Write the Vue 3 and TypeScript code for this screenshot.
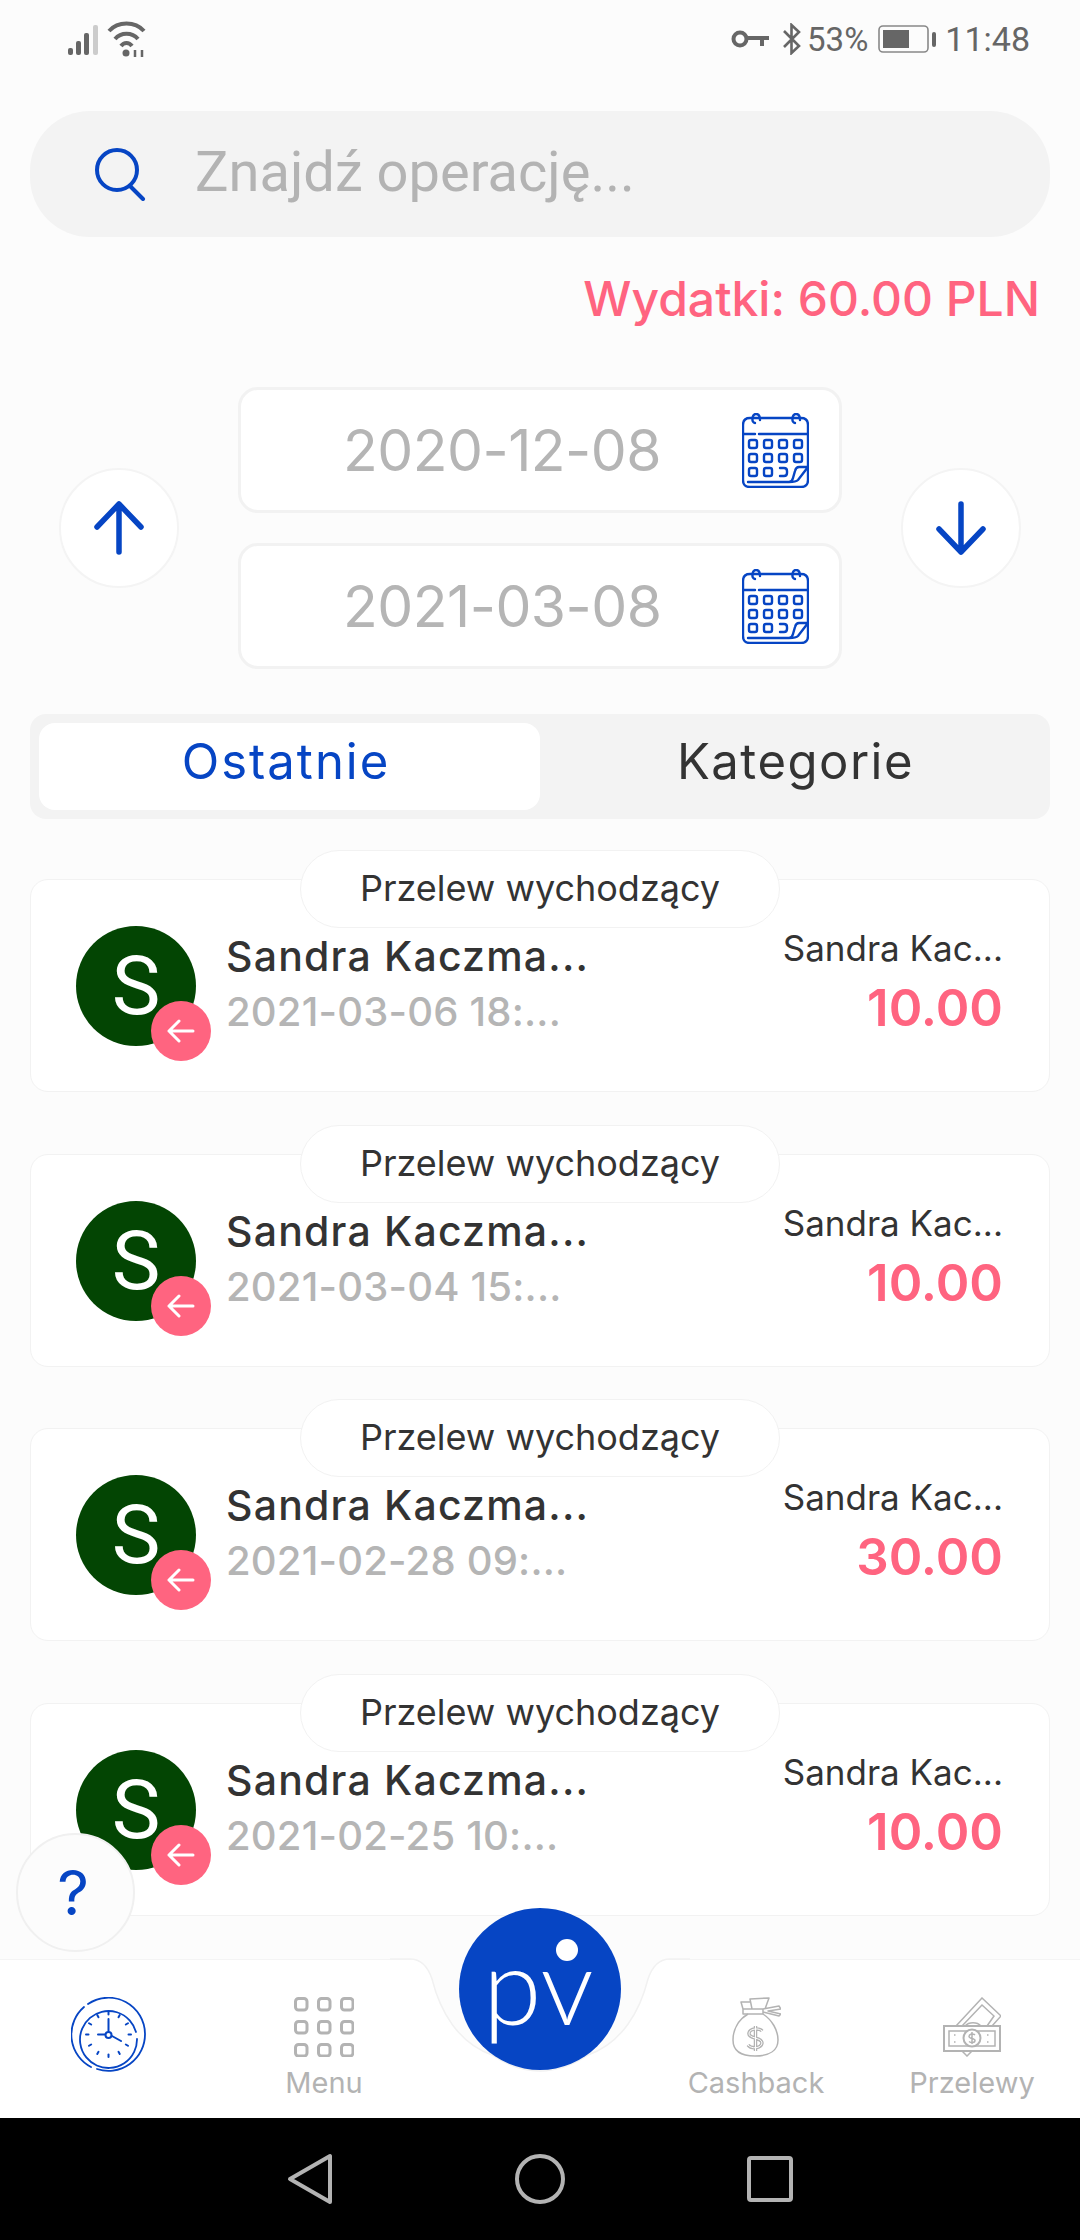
<script setup lang="ts">
interface Operation {
  date: string
  amount: string
}

const operations: Operation[] = [
  { date: '2021-03-06 18:...', amount: '10.00' },
  { date: '2021-03-04 15:...', amount: '10.00' },
  { date: '2021-02-28 09:...', amount: '30.00' },
  { date: '2021-02-25 10:...', amount: '10.00' },
]
const dates = ['2020-12-08', '2021-03-08']
const menuDots = Array.from({ length: 9 }, (_, i) => ({ x: 1.5 + (i % 3) * 23, y: 1.5 + Math.floor(i / 3) * 23 }))
const calendarDots = [
  [11, 31], [26, 31], [41, 31], [56, 31],
  [11, 45], [26, 45], [41, 45], [56, 45],
  [11, 59], [26, 59],
]
const clockTicks = Array.from({ length: 12 }, (_, i) => i * 30)
</script>

<template>
  <div class="page">
    <div class="status">
      <div class="status-left">
        <svg width="34" height="34" viewBox="0 0 34 34">
          <rect x="0" y="26" width="5" height="7" rx="2" fill="#666" />
          <rect x="8" y="19" width="5" height="14" rx="2" fill="#666" />
          <rect x="16" y="11" width="5" height="22" rx="2" fill="#666" />
          <rect x="25" y="3" width="5" height="30" rx="2" fill="#ccc" />
        </svg>
        <svg width="40" height="38" viewBox="0 0 40 38" fill="none" stroke="#666" stroke-width="4">
          <path d="M2 11C11 1 28 1 37 11" />
          <path d="M8 19C14 12 25 12 31 19" />
          <path d="M14 26C17 22 22 22 25 26" />
          <circle cx="19" cy="33" r="3.500" fill="#666" stroke="none" />
          <path d="M28 37V30M35 37V30" stroke-width="2.500" />
        </svg>
      </div>
      <div class="status-right">
        <svg class="key" width="39" height="18" viewBox="0 0 39 18" fill="none" stroke="#666" stroke-width="4">
          <circle cx="9" cy="9" r="6.500" />
          <path d="M15 8H38M31 8V16" />
        </svg>
        <svg class="bt" width="20" height="32" viewBox="0 0 20 32" fill="none" stroke="#666" stroke-width="2.600">
          <path d="M2 8L17 23L9.500 30V2L17 9L2 24" />
        </svg>
        <span class="pct">53%</span>
        <svg class="battery" width="58" height="28" viewBox="0 0 58 28">
          <rect x="1" y="1" width="49" height="26" rx="4" fill="none" stroke="#888" stroke-width="1.600" />
          <rect x="5" y="5" width="26" height="18" fill="#666" />
          <rect x="54" y="7" width="4" height="15" rx="2" fill="#666" />
        </svg>
        <span class="clock">11:48</span>
      </div>
    </div>

    <div class="search">
      <svg width="54" height="54" viewBox="0 0 54 54" fill="none" stroke="#0645c4" stroke-width="4" stroke-linecap="round">
        <circle cx="23" cy="23" r="20" />
        <path d="M36 39L49 52" />
      </svg>
      <span class="search-text">Znajdź operację...</span>
    </div>

    <div class="total">Wydatki: 60.00 PLN</div>

    <div class="range">
      <button class="round">
        <svg width="50" height="54" viewBox="0 0 50 54" fill="none" stroke="#0645c4" stroke-width="5.500" stroke-linecap="round" stroke-linejoin="round">
          <path d="M25 51V3M3 26L25 3L47 26" />
        </svg>
      </button>
      <div class="date-col">
        <div v-for="d in dates" :key="d" class="date">
          <span class="date-text">{{ d }}</span>
          <svg class="calendar" width="67" height="75" viewBox="0 0 67 75" fill="none" stroke="#0645c4" stroke-width="2.400" stroke-linecap="round">
            <path d="M8 5H59Q66 5 66 12V67Q66 74 59 74H8Q1 74 1 67V12Q1 5 8 5Z" />
            <path d="M1 21H13M17 21H66" />
            <path d="M13 10C9 10 10 1 14 1C17 1 18 4 18 7M53 10C49 10 50 1 54 1C57 1 58 4 58 7" />
            <rect v-for="c in calendarDots" :key="c.join()" :x="c[0] - 4" :y="c[1] - 4" width="8" height="8" rx="2" />
            <path d="M38 55H42Q45 55 45 58V60Q45 63 42 63H38" />
            <path d="M66 54H57Q54 54 53 58L51 65Q50 69 47 69H6M66 54L56 67Q54 69 47 69" />
          </svg>
        </div>
      </div>
      <button class="round">
        <svg width="50" height="54" viewBox="0 0 50 54" fill="none" stroke="#0645c4" stroke-width="5.500" stroke-linecap="round" stroke-linejoin="round">
          <path d="M25 3V51M3 28L25 51L47 28" />
        </svg>
      </button>
    </div>

    <div class="tabs">
      <div class="tab active">Ostatnie</div>
      <div class="tab">Kategorie</div>
    </div>

    <div class="list">
      <div v-for="op in operations" :key="op.date" class="item">
        <div class="pill">Przelew wychodzący</div>
        <div class="card">
          <div class="avatar">
            S
            <span class="badge">
              <svg width="28" height="24" viewBox="0 0 28 24" fill="none" stroke="#fff" stroke-width="3" stroke-linecap="round" stroke-linejoin="round">
                <path d="M26 12H2M12 2L2 12L12 22" />
              </svg>
            </span>
          </div>
          <div class="info">
            <div class="name">Sandra Kaczma...</div>
            <div class="when">{{ op.date }}</div>
          </div>
          <div class="side">
            <div class="side-name">Sandra Kac...</div>
            <div class="amount">{{ op.amount }}</div>
          </div>
        </div>
      </div>
    </div>

    <div class="nav">
      <svg class="notch" width="300" height="112" viewBox="0 0 300 112">
        <path class="notch-fill" d="M0 0H20C32 0 38 8 42 20C50 52 68 84 102 96Q126 112 150 112Q174 112 198 96C232 84 250 52 258 20C262 8 268 0 280 0H300V-3H0Z" />
        <path class="notch-line" d="M0 0H20C32 0 38 8 42 20C50 52 68 84 102 96Q126 112 150 112Q174 112 198 96C232 84 250 52 258 20C262 8 268 0 280 0H300" />
      </svg>
      <div class="nav-item">
        <svg width="75" height="75" viewBox="0 0 75 75" fill="none" stroke="#0645c4" stroke-width="1.800" stroke-linecap="round">
          <path d="M17 7A36.500 36.500 0 0 1 74 37.500A36.500 36.500 0 0 1 26 72M20 70A36.500 36.500 0 0 1 13 10" />
          <path d="M65 35A28.500 28.500 0 1 0 66 42" />
          <path d="M37.500 22V34M34 37.500H27M41 39L50 44" stroke-width="2" />
          <circle cx="37.500" cy="38" r="3" stroke-width="2" />
          <g stroke-width="2">
            <path v-for="a in clockTicks" :key="a" :transform="`rotate(${a} 37.500 37.500)`" d="M37.500 15V17.500" />
          </g>
        </svg>
      </div>
      <div class="nav-item">
        <svg width="60" height="60" viewBox="0 0 60 60" fill="none" stroke="#b3b3b3" stroke-width="3">
          <rect v-for="(m, i) in menuDots" :key="i" :x="m.x" :y="m.y" width="11.500" height="11.500" rx="3" />
        </svg>
        <span class="nav-label">Menu</span>
      </div>
      <div class="nav-item"></div>
      <div class="nav-item">
        <svg width="49" height="60" viewBox="0 0 49 60" fill="none" stroke="#b3b3b3" stroke-width="1.500" stroke-linejoin="round">
          <path d="M16 17C6 23 1 33 1 43C1 53 8 59 23 59C38 59 46 53 46 43C46 33 40 23 31 17" />
          <path d="M11 12H31V17H11ZM11 12L9 5L19 5M20 12L18 2L37 1L33 12M31 12L47 9L49 12L36 14L49 17L47 19L31 15" />
          <path d="M30 34C28 31 18 31 17 36C16 42 30 40 30 46C29 52 19 52 16 48M23.500 29V54" stroke-width="3.500" />
          <path d="M30 34C28 31 18 31 17 36C16 42 30 40 30 46C29 52 19 52 16 48M23.500 29V54" stroke="#fff" stroke-width="1" />
        </svg>
        <span class="nav-label">Cashback</span>
      </div>
      <div class="nav-item">
        <svg width="58" height="60" viewBox="0 0 58 60" fill="none" stroke="#b3b3b3" stroke-width="1.500">
          <path d="M13 29L39 1L58 19L49 29M19 29L39 8L51 19L44 29" />
          <path d="M22 29A10 8 0 0 1 38 29" />
          <rect x="1" y="29" width="56" height="25" stroke-width="2" />
          <rect x="6" y="34" width="46" height="15" />
          <circle cx="29" cy="41" r="8.500" fill="#fff" stroke-width="2" />
          <path d="M32 38C30 36 26 37 26 39.500C26 42 32 41 32 43.500C32 46 28 46 26 44.500M29 35V47" />
          <path d="M19 54L24 59L29 54" />
          <path d="M11 38H14M11 45H14M44 38H47M44 45H47" stroke-dasharray="1.500 1.500" />
        </svg>
        <span class="nav-label">Przelewy</span>
      </div>
    </div>

    <div class="sysbar">
      <svg width="46" height="52" viewBox="0 0 46 52" fill="none" stroke="#b3b3b3" stroke-width="4" stroke-linejoin="round">
        <path d="M43 3V49L3 26Z" />
      </svg>
      <svg width="50" height="50" viewBox="0 0 50 50" fill="none" stroke="#b3b3b3" stroke-width="4">
        <circle cx="25" cy="25" r="23" />
      </svg>
      <svg width="46" height="46" viewBox="0 0 46 46" fill="none" stroke="#b3b3b3" stroke-width="4" stroke-linejoin="round">
        <rect x="2" y="2" width="42" height="42" rx="2" />
      </svg>
    </div>

    <button class="help">?</button>
    <div class="logo">
      <span class="logo-text">pv</span>
      <span class="logo-dot"></span>
    </div>
  </div>
</template>

<style scoped>
.page {
  position: relative;
  width: 1080px;
  height: 2240px;
  display: flex;
  flex-direction: column;
  overflow: hidden;
  background: #fcfcfc;
  font-family: Inter, "Noto Sans", sans-serif;
  color: #333;
}

.status {
  height: 78px;
  flex: none;
  padding: 0 50px 0 68px;
  display: flex;
  justify-content: space-between;
  align-items: center;
  box-sizing: border-box;
  font-family: Roboto, sans-serif;
  color: #666;
}
.status-left {
  display: flex;
  gap: 5px;
  align-items: center;
}
.status-right {
  display: flex;
  align-items: center;
  font-size: 33px;
}
.bt {
  margin-left: 12px;
}
.pct {
  margin-left: 5px;
}
.battery {
  margin-left: 10px;
}
.clock {
  margin-left: 9px;
  font-size: 34px;
}

.search {
  flex: none;
  margin: 33px 30px 0;
  height: 126px;
  border-radius: 60px;
  background: #f3f3f3;
  display: flex;
  align-items: center;
  padding-left: 64px;
}
.search-text {
  margin-left: 47px;
  margin-top: -4px;
  font-family: Roboto, sans-serif;
  font-size: 56px;
  color: #b3b3b3;
}

.total {
  flex: none;
  height: 124px;
  line-height: 124px;
  margin-bottom: 26px;
  padding-right: 40px;
  text-align: right;
  font-size: 48px;
  font-weight: 500;
  color: #ff6480;
}

.range {
  flex: none;
  display: flex;
  align-items: center;
  justify-content: space-between;
  padding: 0 59px;
}
.round {
  width: 120px;
  height: 120px;
  border-radius: 50%;
  border: 2px solid #f4f4f4;
  background: #fff;
  padding: 0;
  display: flex;
  align-items: center;
  justify-content: center;
}
.date-col {
  width: 604px;
  display: flex;
  flex-direction: column;
  gap: 30px;
}
.date {
  position: relative;
  height: 126px;
  box-sizing: border-box;
  border: 3px solid #f2f2f2;
  border-radius: 20px;
  background: #fff;
  display: flex;
  align-items: center;
  padding-left: 102px;
}
.date-text {
  font-size: 57px;
  color: #b5b5b5;
  letter-spacing: -0.5px;
}
.calendar {
  position: absolute;
  right: 30px;
  top: 23px;
}

.tabs {
  flex: none;
  margin: 45px 30px 0;
  height: 105px;
  box-sizing: border-box;
  padding: 9px;
  border-radius: 16px;
  background: #f3f3f3;
  display: grid;
  grid-template-columns: 501px 1fr;
}
.tab {
  padding-left: 10px;
  font-size: 49px;
  letter-spacing: 1.500px;
  line-height: 78px;
  text-align: center;
  color: #333;
}
.tab.active {
  padding: 0 7px 0 0;
  background: #fff;
  border-radius: 16px;
  color: #0645c4;
  letter-spacing: 2px;
}

.list {
  flex: 1;
  min-height: 0;
  padding: 31px 30px 0;
  display: flex;
  flex-direction: column;
  gap: 32.500px;
}
.item {
  position: relative;
  padding-top: 29px;
}
.pill {
  position: absolute;
  z-index: 1;
  top: 0;
  left: 270px;
  width: 480px;
  height: 78px;
  box-sizing: border-box;
  border: 1.500px solid #f2f2f2;
  border-radius: 40px;
  background: #fff;
  text-align: center;
  line-height: 74px;
  font-size: 36px;
}
.card {
  height: 213px;
  box-sizing: border-box;
  border: 1.500px solid #f2f2f2;
  border-radius: 18px;
  background: #fff;
  display: flex;
  padding: 46px 46px 0 45px;
}
.avatar {
  position: relative;
  flex: none;
  width: 120px;
  height: 120px;
  border-radius: 50%;
  background: #034503;
  color: #fff;
  font-family: Roboto, sans-serif;
  font-size: 82px;
  line-height: 120px;
  text-align: center;
}
.badge {
  position: absolute;
  left: 75px;
  top: 75px;
  width: 60px;
  height: 60px;
  border-radius: 50%;
  background: #ff6480;
  display: flex;
  align-items: center;
  justify-content: center;
}
.info {
  margin: 2px 0 0 30px;
  flex: 1;
}
.name {
  font-size: 41px;
  font-weight: 500;
  letter-spacing: 1.200px;
  line-height: 56px;
}
.when {
  font-size: 40px;
  font-weight: 500;
  letter-spacing: 0.2px;
  line-height: 56px;
  color: #b5b5b5;
}
.side {
  margin-top: -3px;
  text-align: right;
}
.side-name {
  font-size: 35px;
  line-height: 50px;
}
.amount {
  margin-top: 2px;
  font-size: 51px;
  font-weight: 600;
  line-height: 66px;
  color: #ff6480;
}

.nav {
  position: relative;
  flex: none;
  height: 159px;
  box-sizing: border-box;
  background: #fff;
  border-top: 1.500px solid #f4f4f4;
  padding-top: 37px;
  display: grid;
  grid-template-columns: repeat(5, 216px);
}
.notch {
  position: absolute;
  left: 390px;
  top: -1px;
  overflow: visible;
}
.notch-fill {
  fill: #fcfcfc;
}
.notch-line {
  fill: none;
  stroke: #f1f1f1;
  stroke-width: 1.500;
}
.nav-item {
  position: relative;
  display: flex;
  flex-direction: column;
  align-items: center;
}
.nav-label {
  margin-top: 6px;
  font-size: 29px;
  line-height: 40px;
  color: #b3b3b3;
}

.sysbar {
  flex: none;
  height: 122px;
  background: #000;
  display: grid;
  grid-template-columns: 46px 50px 46px;
  justify-content: center;
  align-items: center;
  column-gap: 182px;
}

.help {
  position: absolute;
  left: 16px;
  top: 1833px;
  width: 119px;
  height: 119px;
  border-radius: 50%;
  border: 2px solid #f0f0f0;
  background: #fcfcfc;
  padding: 0 5px 0 0;
  font-family: Inter, sans-serif;
  font-size: 62px;
  color: #0645c4;
}
.logo {
  position: absolute;
  left: 459px;
  top: 1908px;
  width: 162px;
  height: 162px;
  border-radius: 50%;
  background: #0645c4;
}
.logo-text {
  position: absolute;
  left: 24px;
  top: 24px;
  font-family: Lato, sans-serif;
  font-weight: 300;
  font-size: 106px;
  line-height: 104px;
  color: #fff;
}
.logo-dot {
  position: absolute;
  left: 97px;
  top: 31px;
  width: 22px;
  height: 22px;
  border-radius: 50%;
  background: #fff;
}
</style>
